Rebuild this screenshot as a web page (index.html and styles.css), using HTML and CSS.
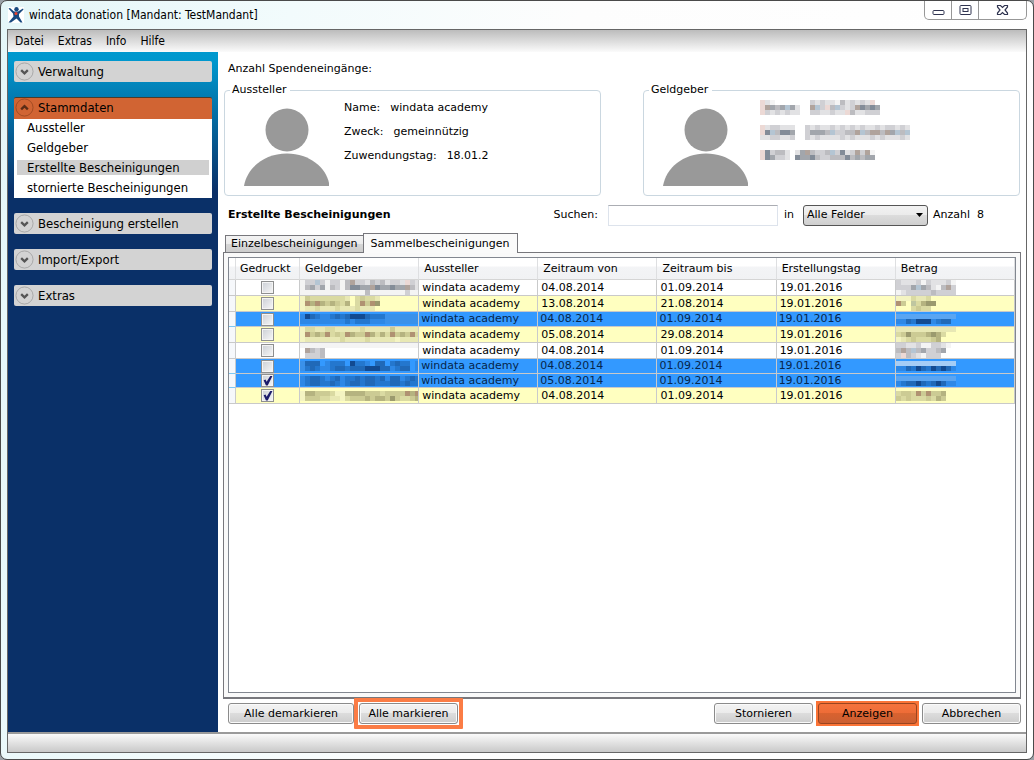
FILE: index.html
```html
<!DOCTYPE html>
<html lang="de">
<head>
<meta charset="utf-8">
<title>windata donation</title>
<link rel="stylesheet" href="styles.css">
</head>
<body>
<div class="window">
  <header class="titlebar">
    <svg class="logo" viewBox="0 0 16 16" aria-hidden="true"><rect width="16" height="16" fill="#fff"/><path d="M.5 1.500 2 1 6 4.500 10 4.500 15 1.500 15.500 2.500 11 7 11 9.500 14.500 15.500 12.500 15.500 8.500 11.500 3 15.500.5 15.500 5.500 9.500 5 6.500Z" fill="#17497f"/><circle cx="8.500" cy="2.200" r="2.200" fill="#17497f"/><circle cx="8" cy="6.500" r="1.500" fill="#e8432e"/></svg>
    <h1 class="title">windata donation [Mandant: TestMandant]</h1>
    <div class="controls">
      <button class="ctl" aria-label="Minimieren"><svg width="13" height="13" viewBox="0 0 13 13"><rect x="1" y="6.500" width="11" height="4" rx="1" fill="#fff" stroke="#303450"/></svg></button>
      <button class="ctl" aria-label="Maximieren"><svg width="13" height="13" viewBox="0 0 13 13"><rect x="1" y="1.500" width="11" height="9" rx="1" fill="#fff" stroke="#303450"/><rect x="4" y="4.500" width="5" height="3" fill="#fff" stroke="#303450"/></svg></button>
      <button class="ctl ctl-close" aria-label="Schließen"><svg width="13" height="13" viewBox="0 0 13 13"><path d="M1.500 1.500H4.500L6.500 3.500 8.500 1.500H11.500V3L9 6 11.500 9V10.500H8.500L6.500 8.500 4.500 10.500H1.500V9L4 6 1.500 3Z" fill="#fff" stroke="#303450" stroke-width="1.200"/></svg></button>
    </div>
  </header>
  <div class="frame">
    <nav class="menubar">
      <button>Datei</button><button>Extras</button><button>Info</button><button>Hilfe</button>
    </nav>
    <div class="body">
      <nav class="sidebar">
        <button class="group"><svg class="chev" viewBox="0 0 20 20"><circle cx="10" cy="10" r="9"/><path d="M6.500 8.500 10 12 13.500 8.500"/></svg>Verwaltung</button>
        <div class="open">
          <button class="group group-active"><svg class="chev" viewBox="0 0 20 20"><circle cx="10" cy="10" r="9"/><path d="M6.500 12 10 8.500 13.500 12"/></svg>Stammdaten</button>
          <ul class="items">
            <li><a href="#">Aussteller</a></li>
            <li><a href="#">Geldgeber</a></li>
            <li><a href="#" class="current">Erstellte Bescheinigungen</a></li>
            <li><a href="#">stornierte Bescheinigungen</a></li>
          </ul>
        </div>
        <button class="group"><svg class="chev" viewBox="0 0 20 20"><circle cx="10" cy="10" r="9"/><path d="M6.500 8.500 10 12 13.500 8.500"/></svg>Bescheinigung erstellen</button>
        <button class="group"><svg class="chev" viewBox="0 0 20 20"><circle cx="10" cy="10" r="9"/><path d="M6.500 8.500 10 12 13.500 8.500"/></svg>Import/Export</button>
        <button class="group"><svg class="chev" viewBox="0 0 20 20"><circle cx="10" cy="10" r="9"/><path d="M6.500 8.500 10 12 13.500 8.500"/></svg>Extras</button>
      </nav>
      <main class="main">
        <p class="count">Anzahl Spendeneingänge:</p>
        <div class="parties">
          <fieldset class="party">
            <legend>Aussteller</legend>
            <div class="party-body">
              <svg class="avatar" viewBox="0 0 86 80"><circle cx="43" cy="22" r="21.500"/><path d="M0 78C3 60 20 45.500 43 45.500S82 60 85 75V78Z"/></svg>
              <dl class="facts">
                <div><dt>Name:</dt><dd>windata academy</dd></div>
                <div><dt>Zweck:</dt><dd>gemeinnützig</dd></div>
                <div><dt>Zuwendungstag:</dt><dd>18.01.2</dd></div>
              </dl>
            </div>
          </fieldset>
          <fieldset class="party">
            <legend>Geldgeber</legend>
            <div class="party-body">
              <svg class="avatar" viewBox="0 0 86 80"><circle cx="43" cy="22" r="21.500"/><path d="M0 78C3 60 20 45.500 43 45.500S82 60 85 75V78Z"/></svg>
              <div class="hidden-facts"></div>
            </div>
          </fieldset>
        </div>
        <div class="searchbar">
          <h2 class="heading">Erstellte Bescheinigungen</h2>
          <label for="q">Suchen:</label>
          <input id="q" class="search" type="text">
          <label for="field">in</label>
          <span class="picker"><select id="field"><option>Alle Felder</option></select><svg viewBox="0 0 7 4" aria-hidden="true"><path d="M0 0H7L3.500 4Z"/></svg></span>
          <span class="total">Anzahl&nbsp; 8</span>
        </div>
        <div class="tabs" role="tablist">
          <button class="tab" role="tab">Einzelbescheinigungen</button><button class="tab tab-on" role="tab" aria-selected="true">Sammelbescheinigungen</button>
        </div>
        <section class="panel">
          <div class="grid">
            <table>
              <colgroup><col class="c-mark"><col class="c-print"><col span="6"></colgroup>
              <thead><tr><th></th><th>Gedruckt</th><th>Geldgeber</th><th>Aussteller</th><th>Zeitraum von</th><th>Zeitraum bis</th><th>Erstellungstag</th><th>Betrag</th></tr></thead>
              <tbody id="rows"></tbody>
            </table>
          </div>
        </section>
        <div class="actions">
          <button class="btn btn-wide">Alle demarkieren</button>
          <span class="halo halo-open"><button class="btn">Alle markieren</button></span>
          <span class="spacer"></span>
          <button class="btn">Stornieren</button>
          <span class="halo"><button class="btn primary">Anzeigen</button></span>
          <button class="btn">Abbrechen</button>
        </div>
      </main>
    </div>
    <footer class="status"></footer>
  </div>
</div>
<script src="app.js"></script>
</body>
</html>
```
FILE: styles.css
```css
* { box-sizing: border-box; }
body { margin: 0; background: #9aa0a6; font: 11px/14px "DejaVu Sans", sans-serif; color: #000; }
button, input, select { font: inherit; color: inherit; margin: 0; padding: 0; border: 0; background: none; }
p, h1, h2, dl, dd, ul { margin: 0; padding: 0; }
.window { display: flex; flex-direction: column; min-height: 100vh; padding: 0 6px 6px; border: 1px solid #4a4a4a; border-radius: 7px; background: linear-gradient(100deg, #e4f6f8 0, #f2fbfc 25%, #fdfdfd 50%, #fff 100%); }
.titlebar { display: flex; height: 28px; align-items: center; padding-left: 1px; }
.logo { width: 16px; height: 16px; }
.title { flex: 1; margin-left: 5px; font: 12px/16px "DejaVu Sans Condensed", "DejaVu Sans", sans-serif; }
.controls { display: flex; align-self: flex-start; height: 19px; border: 1px solid #979797; border-top: 0; border-radius: 0 0 5px 5px; background: #fff; }
.ctl { display: flex; align-items: center; justify-content: center; width: 27px; border-right: 1px solid #979797; }
.ctl-close { width: 47px; border-right: 0; }
.frame { flex: 1; display: flex; flex-direction: column; border: 1px solid #666; background: #fff; }
.menubar { display: flex; gap: 14px; height: 22px; padding-left: 7px; background: linear-gradient(#bcbcbc, #fbfbfb); font: 12px/22px "DejaVu Sans Condensed", "DejaVu Sans", sans-serif; }
.body { flex: 1; display: flex; }
.sidebar { display: flex; flex-direction: column; gap: 15px; width: 210px; padding: 9px 6px; background: linear-gradient(#0099cf 0, #0097cd 10px, #0a3068 140px, #0a3068); font: 13px/19px "DejaVu Sans Condensed", "DejaVu Sans", sans-serif; }
.group { display: flex; align-items: center; gap: 4px; width: 100%; height: 21px; padding-left: 1px; border-radius: 2px; background: #d3d3d3; }
.group-active { height: 22px; padding-bottom: 2px; border-top: 1px solid #4c3b2a; border-radius: 2px 2px 0 0; background: #d16433; }
.chev { width: 19px; height: 19px; fill: none; stroke: #a5a5a5; }
.chev path { stroke: #555; stroke-width: 2.4; }
.group-active .chev { stroke: #a04a22; }
.group-active .chev path { stroke: #5b2b15; }
.items { padding: 1px 3px 0; list-style: none; background: #fff; height: 79px; display: flex; flex-direction: column; gap: 5px; }
.items li { line-height: 15px; }
.items a { display: block; padding-left: 10px; color: #000; text-decoration: none; }
.items .current { background: #d0d0d0; }
.main { flex: 1; min-width: 0; display: flex; flex-direction: column; padding: 10px 5px 8px; }
.count { padding-left: 5px; }
.parties { display: grid; grid-template-columns: 1fr 1fr; gap: 42px; margin: 7px 0 8px; padding: 0 1px; }
.party { min-width: 0; margin: 0; padding: 0; border: 1px solid #cad7e0; border-radius: 4px; }
.party legend { margin-left: 5px; padding: 0 4px 0 2px; }
.party-body { display: flex; gap: 14px; height: 98px; padding: 11px 0 0 19px; }
.avatar { flex: none; width: 86px; height: 80px; fill: #999; }
.facts { display: flex; flex-direction: column; gap: 10px; margin-top: -7px; }
.facts div { display: flex; gap: 10px; }
.hidden-facts { display: flex; flex-direction: column; gap: 10px; margin: -8px 0 0 -3px; }
.mosaic { display: block; flex: none; shape-rendering: crispEdges; }
.searchbar { display: flex; align-items: center; height: 22px; padding-right: 1px; }
.heading { flex: 1; padding-left: 5px; font-size: 11px; line-height: 14px; }
.search { width: 170px; height: 21px; margin: 0 6px 0 10px; border: 1px solid #dde3ec; border-top-color: #abadb3; background: #fff; padding: 0 3px; }
.picker { display: grid; width: 125px; margin: 0 5px 0 9px; align-items: center; }
.picker > * { grid-area: 1 / 1; }
.picker select { appearance: none; width: 100%; height: 21px; padding: 0 16px 1px 3px; border: 1px solid #555; border-radius: 3px; background: linear-gradient(#f2f2f2 0, #ebebeb 49%, #dcdcdc 50%, #cfcfcf); }
.picker svg { justify-self: end; width: 7px; height: 4px; margin-right: 5px; pointer-events: none; }
.total { width: 87px; }
.tabs { display: flex; align-items: flex-end; height: 20px; margin-top: 6px; padding-left: 2px; }
.tab { height: 17px; padding: 0 5px; border: 1px solid #77777c; border-bottom: 0; background: linear-gradient(#f3f3f3, #ebebeb 50%, #d6d6d6 51%, #cdcdcd); }
.tab-on { z-index: 1; height: 20px; margin: 0 0 -1px -1px; padding: 0 7px; background: #fafafa; }
.panel { flex: 1; display: flex; padding: 4px; border: 1px solid #77777c; border-bottom-width: 2px; background: #f9f9f9; }
.grid { flex: 1; min-width: 0; border: 1px solid #828790; background: #fff; }
table { width: 100%; border-collapse: separate; border-spacing: 0; table-layout: fixed; }
.c-mark { width: 7px; }
.c-print { width: 64px; }
th { height: 22px; padding: 0 0 0 5px; border-right: 1px solid #dedfe1; border-bottom: 1px solid #d5d5d5; background: linear-gradient(#fff 0, #fff 40%, #f3f4f6 41%, #f1f2f4); font-weight: 400; text-align: left; white-space: nowrap; }
th:first-child { padding: 0; }
th:nth-child(2) { padding-left: 4px; }
td { height: 16px; padding: 0 0 0 3px; border-right: 1px solid #c9cacb; border-bottom: 1px solid #c9c9c9; line-height: 13px; white-space: nowrap; overflow: hidden; }
tr.odd td { background: #ffffc0; }
tr.sel td { height: 15px; padding-left: 2px; background: #3399ff; line-height: 12px; color: #06264c; }
tr.tight td { height: 14px; }
tr td:nth-child(2), tr.sel td:nth-child(2) { padding: 0; text-align: center; }
tr td:nth-child(3), tr td:nth-child(8), tr.sel td:nth-child(3), tr.sel td:nth-child(8) { padding: 0; vertical-align: middle; }
tr td:first-child, tr.odd td:first-child, tr.sel td:first-child { padding: 0; background: #f6f8fb; }
tr.sel td:first-child { border-bottom-color: #7cc8f4; }
.check { appearance: none; display: block; width: 13px; height: 13px; margin: 0 auto; border: 1px solid #8e8f8f; background: linear-gradient(135deg, #cbcfd5, #f7f7f7); box-shadow: inset 0 0 0 1px #f4f4f4; }
.check:checked::after { content: ""; display: block; width: 11px; height: 11px; background: #1b1b6b; clip-path: polygon(15% 48%, 32% 42%, 42% 62%, 75% 8%, 95% 8%, 52% 95%, 36% 95%); }
.actions { display: flex; align-items: center; gap: 5px; height: 21px; margin-top: 4px; padding-left: 5px; }
.btn { width: 99px; height: 21px; border: 1px solid #8b8b8b; border-radius: 3px; background: linear-gradient(#f3f3f3 0, #ebebeb 49%, #dcdcdc 50%, #cdcdcd); box-shadow: inset 0 0 0 1px #fafafa; }
.btn-wide { width: 126px; }
.halo { display: flex; margin: 0 -2px; padding: 2px; border: 0 solid #fb7c45; background: #fb7437; }
.halo-open { margin: 0 -5px; padding: 1px; border-width: 4px; border-radius: 1px; background: #fff; }
.primary { border-color: #9a4520; background: linear-gradient(#f4733d 0, #ee6c37 49%, #d9622f 50%, #cb5f33); box-shadow: none; }
.spacer { flex: 1; }
.status { height: 20px; border-top: 2px solid #9a9a9a; background: linear-gradient(#fafafa, #c9c9c9); }
```
FILE: app.js
```js
// Censored values are drawn as blocks of 5px; each character picks a tone.
const tones = {
  plain: { 0: "#f4f4f4", 1: "#e2e2e4", 2: "#d0d0d4", 3: "#bcbcc0", 4: "#a2a6ac", 5: "#838c98", r: "#ecd9d5", t: "#b0a39c", b: "#b4c5d3" },
  odd: { 0: "#f4f4c2", 1: "#e8e8b4", 2: "#dadaa2", 3: "#cccb94", 4: "#b5b380", 5: "#9b9a6e", r: "#d7c39a", t: "#b09272", b: "#bfc6a0" },
  sel: { 0: "#5aa5f2", 1: "#a5cdf6", 2: "#2e88e6", 3: "#2477ce", 4: "#2069b8", 5: "#124a91", r: "#3a91ea", t: "#2a6ebd", b: "#1b74cf" }
};
function mosaic(text, kind) {
  const lines = text.split("|");
  const width = Math.max(...lines.map(l => l.length)) * 5;
  let out = "";
  lines.forEach((line, y) => [...line].forEach((c, x) => {
    if (tones[kind][c]) out += `<rect x="${x * 5}" y="${y * 5}" width="5" height="5" fill="${tones[kind][c]}"/>`;
  }));
  return `<svg class="mosaic" width="${width}" height="${lines.length * 5}">${out}</svg>`;
}
document.querySelector(".hidden-facts").innerHTML = [
  "r10.......212110312121r1|rt434b41..tb2r3b212t54544|r2121211..2211211r3112222".replace(/(.)(?=\||$)/g, ""),
  "r122111..212112121212112122121|r5b3554..24443b2233tb3tt3t4b3b|1122112..212111121211121211121",
  "r52331.14t3223b2512t2t0|r54221.5445322333534344",
].map(m => mosaic(m, "plain")).join("");

const data = [
  ["plain", "04.08.2014", "01.09.2014", "", "022b202203t2213231221r211|03424032035544t544544t314b|000000000000030000000200", "211120211120|2224b43103t2|012222232222"],
  ["odd", "13.08.2014", "21.08.2014", "", "0322222221.23221........|0t4t434324.2t3t5........|011211121112111.........", "0002112.....|t3.b2455....|...2322....."],
  ["sel", "04.08.2014", "01.09.2014", "", "25432234345554333rrrrrrr|22222222232333222rrrrrrr", "000000000000|22435552344.|23233442342."],
  ["odd", "05.08.2014", "29.08.2014", "", "022112211111211111311111|0t343t232t433t4242t343t2|011111112111121111101111", "111111111111|2353334542..|012322234...."],
  ["plain", "04.08.2014", "01.09.2014", "", "000000000000000000000000|.t323...................|.2223...................", "22112002210.|3t3b342234..|2r3210222..."],
  ["sel", "04.08.2014", "01.09.2014", "", "r444.2333.5332.44.3433.2|r343223443444555442344.2", "111111111111|224354354542"],
  ["sel tight", "05.08.2014", "01.09.2014", "on", "234432342334344342442343|234433432344344333443433", "000000000000|234454345422|233443334432"],
  ["odd", "04.08.2014", "01.09.2014", "on", "044333200444433323333t4t|033322110233343443532234", "2332t3t334..|3232223243.."]
];
document.getElementById("rows").innerHTML = data.map(([cls, from, to, on, name, sum]) => {
  const kind = cls.split(" ")[0];
  const cut = kind === "sel" ? 2 : 3;
  const part = m => mosaic(m.split("|").slice(0, cut).join("|"), kind);
  return `<tr class="${cls}"><td></td><td><input class="check" type="checkbox" aria-label="Gedruckt"${on ? " checked" : ""}></td><td>${part(name)}</td><td>windata academy</td><td>${from}</td><td>${to}</td><td>19.01.2016</td><td>${part(sum)}</td></tr>`;
}).join("");
```
